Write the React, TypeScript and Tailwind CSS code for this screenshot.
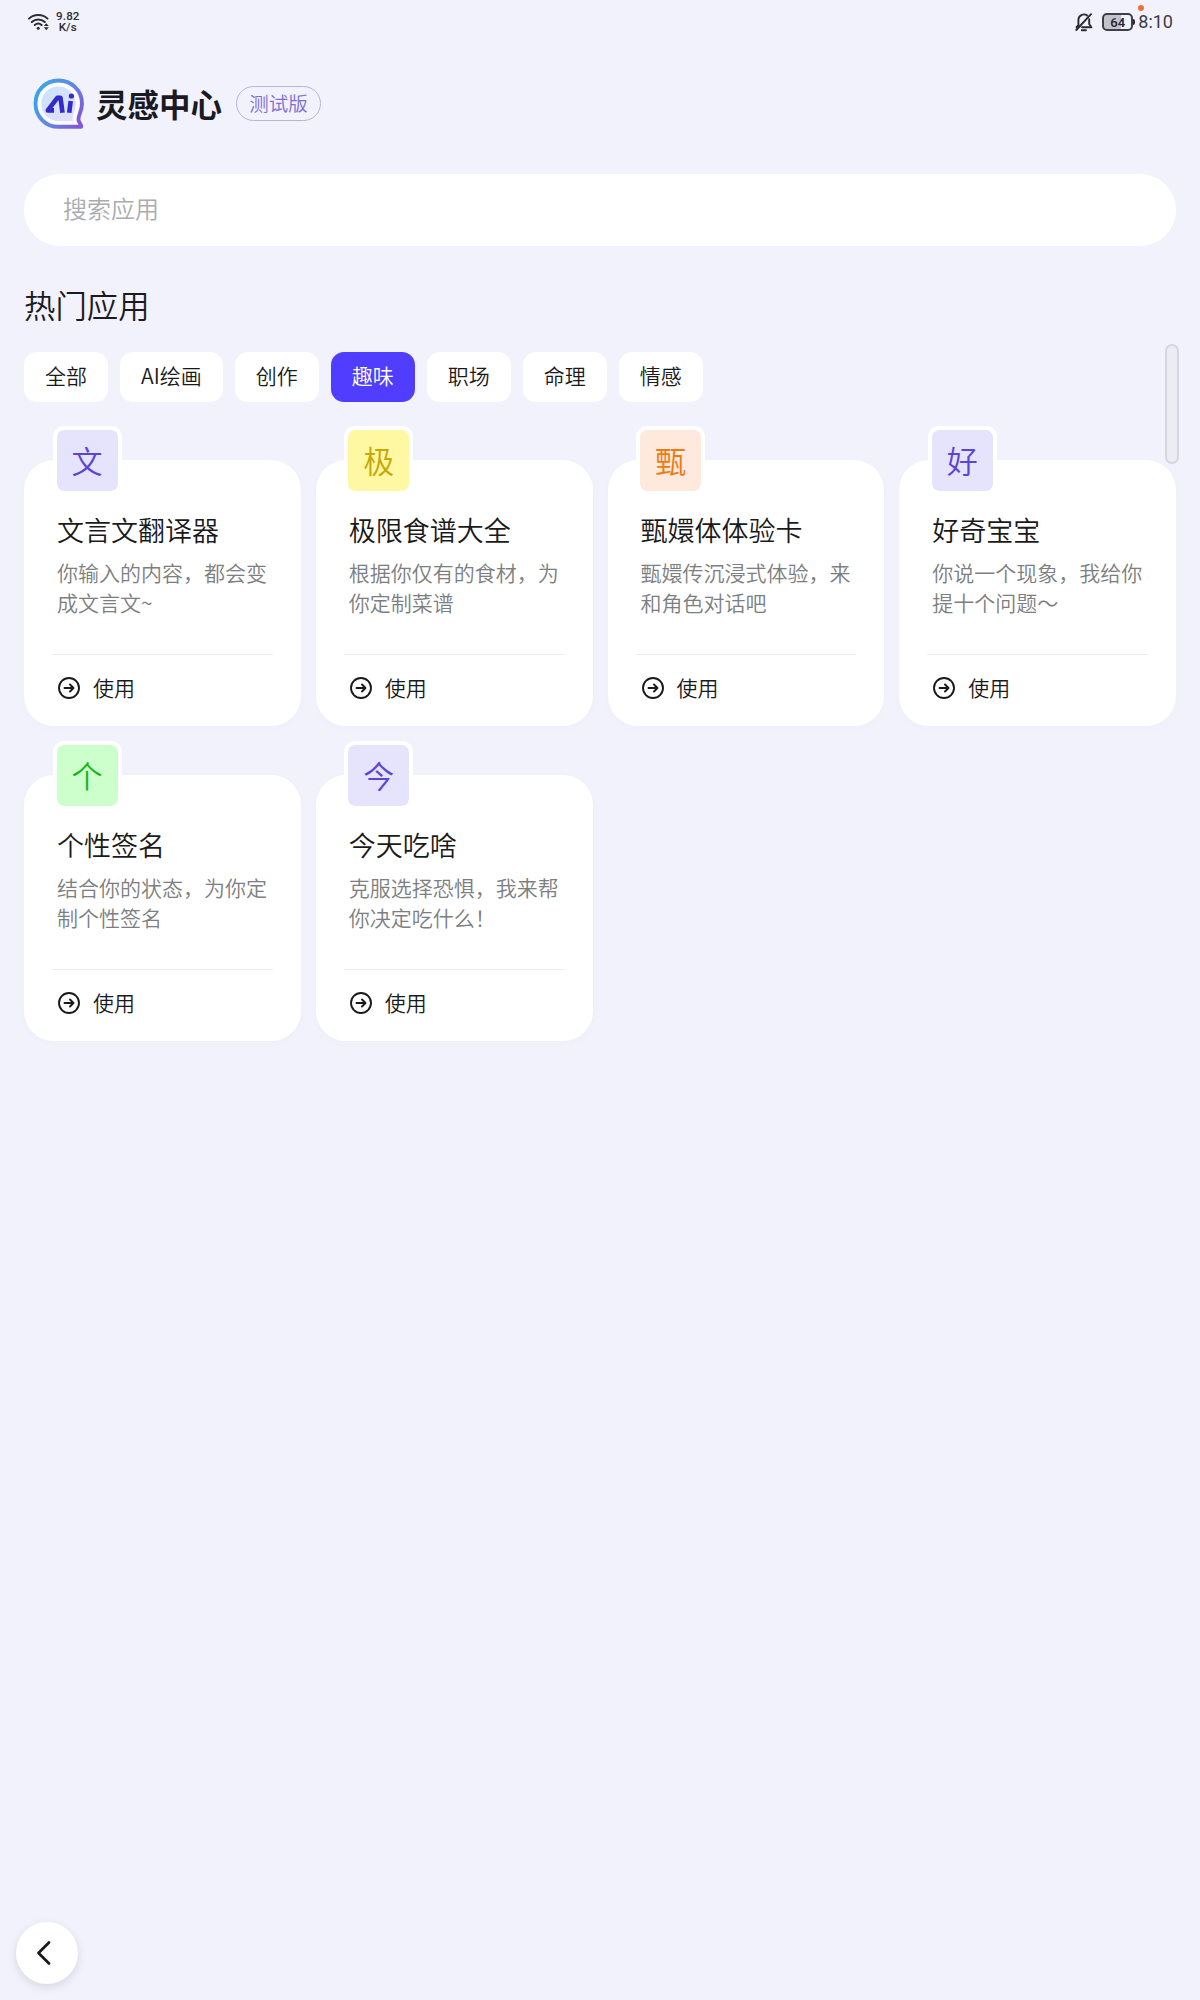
import { useState } from "react";

type AppItem = {
  name: string;
  description: string;
  badgeClassName: string;
};

const categories = ["全部", "AI绘画", "创作", "趣味", "职场", "命理", "情感"];

const apps: AppItem[] = [
  {
    name: "文言文翻译器",
    description: "你输入的内容，都会变成文言文~",
    badgeClassName: "bg-[#e6e3fd] text-[#5b45d6]",
  },
  {
    name: "极限食谱大全",
    description: "根据你仅有的食材，为你定制菜谱",
    badgeClassName: "bg-[#fff8a2] text-[#c6a806]",
  },
  {
    name: "甄嬛体体验卡",
    description: "甄嬛传沉浸式体验，来和角色对话吧",
    badgeClassName: "bg-[#ffe9dc] text-[#ee7a12]",
  },
  {
    name: "好奇宝宝",
    description: "你说一个现象，我给你提十个问题～",
    badgeClassName: "bg-[#e6e3fd] text-[#5b45d6]",
  },
  {
    name: "个性签名",
    description: "结合你的状态，为你定制个性签名",
    badgeClassName: "bg-[#ccffcb] text-[#19b518]",
  },
  {
    name: "今天吃啥",
    description: "克服选择恐惧，我来帮你决定吃什么！",
    badgeClassName: "bg-[#e6e3fd] text-[#5b45d6]",
  },
];

function StatusBar() {
  return (
    <div className="flex h-11 items-center justify-between pr-[27px] pl-7 font-['Roboto'] text-[#2b2b35]">
      <div className="flex items-center gap-[7px]">
        <svg width="21" height="18" viewBox="0 0 21 18" fill="none" stroke="currentColor" strokeWidth="2" strokeLinecap="round">
          <path d="M1 5.600c5-4.800 13.500-4.800 18.500 0M3.800 9c3.600-3.400 9.300-3.400 13 0M6.800 12c2-1.700 4.800-1.700 6.800 0" />
          <circle cx="10.200" cy="15.300" r="1.500" fill="currentColor" stroke="none" />
          <path d="m18.300 10.200 2.500 2.900h-5zM18.300 17.200l2.500-2.900h-5z" fill="currentColor" stroke="none" />
        </svg>
        <div className="text-center text-[11.500px] leading-[11px] font-medium tracking-[0.2px]">
          <div>9.82</div>
          <div>K/s</div>
        </div>
      </div>
      <div className="relative flex items-center">
        <svg width="18" height="20" viewBox="0 0 18 20" fill="none" stroke="currentColor" strokeWidth="1.900" strokeLinecap="round" strokeLinejoin="round">
          <path d="M3.400 13V7.800a5.500 5.500 0 0 1 8.600-4.400M14.200 7.300V12l2.200 3.200H7M1.600 15.200 3.400 13M16 2.200 1.300 18M6.800 18.200h4.200" />
        </svg>
        <div className="ml-[9px] flex h-[18px] w-[31px] items-center justify-center rounded-[5px] border-2 border-[#3f3f49] bg-linear-to-r from-[#c3c3cd] from-64% to-transparent to-64% text-[13px] leading-none font-semibold">
          64
        </div>
        <span className="h-1.5 w-0.5 rounded-r bg-current" />
        <span className="ml-[3px] text-[18px] leading-none font-normal text-[#3c3c46]">8:10</span>
        <span className="absolute -top-[7px] right-[29px] size-1.5 rounded-full bg-[#f0703c]" />
      </div>
    </div>
  );
}

function Logo() {
  return (
    <svg width="54" height="54" viewBox="0 0 54 54" fill="none" aria-hidden="true">
      <defs>
        <linearGradient id="logo-ring" x1="3" y1="12" x2="50" y2="42" gradientUnits="userSpaceOnUse">
          <stop stopColor="#38a7e6" />
          <stop offset="0.550" stopColor="#6385e5" />
          <stop offset="1" stopColor="#8258d2" />
        </linearGradient>
        <linearGradient id="logo-fill" x1="12" y1="10" x2="42" y2="44" gradientUnits="userSpaceOnUse">
          <stop stopColor="#c9e4fb" />
          <stop offset="1" stopColor="#e3defa" />
        </linearGradient>
      </defs>
      <path
        d="M26.500 3.500C13.500 3.500 3.500 13.500 3.500 26.500S13.500 49.800 26.500 49.800H48.600C49.400 49.800 49.500 49.200 49 48.500L46.800 44.200C46 42.500 46.500 40.500 47.500 37.500C49 34 50 31 50 26.500C50 13.500 39.500 3.500 26.500 3.500Z"
        fill="#fbfbff"
        stroke="url(#logo-ring)"
        strokeWidth="3.900"
      />
      <path d="M26.500 9.500a17.300 17.300 0 0 0 0 34.600h14.500c-.8-4 .2-6.500 1.400-10A17.500 17.500 0 0 0 26.500 9.500Z" fill="url(#logo-fill)" />
      <g stroke="#3429c9" strokeWidth="4.600" strokeLinejoin="round">
        <path d="M22 33.400H15.800L25.300 20.800H28.500L30.500 35.700" />
        <path d="M38.700 24 37.200 35.700" />
      </g>
      <circle cx="39.400" cy="19" r="2.600" fill="#3429c9" />
    </svg>
  );
}

function ArrowCircle() {
  return (
    <svg width="24" height="24" viewBox="0 0 24 24" fill="none" stroke="currentColor" strokeWidth="1.900" strokeLinecap="round" strokeLinejoin="round" aria-hidden="true">
      <circle cx="12" cy="12" r="10" />
      <path d="M7.500 12h9M13 8.500l3.500 3.500-3.500 3.500" />
    </svg>
  );
}

function AppCard({ name, description, badgeClassName }: AppItem) {
  return (
    <article className="relative h-[266px] rounded-[30px] bg-white px-[33px] pt-[50px] shadow-[0_2px_8px_rgb(90_90_160/0.02)]">
      <div
        className={`absolute -top-[34px] left-[28.500px] flex size-[69px] items-center justify-center rounded-[11px] border-4 border-white bg-clip-padding pb-0.5 text-[31px] leading-none ${badgeClassName}`}
      >
        {name[0]}
      </div>
      <h3 className="text-[27px] leading-10 text-[#1a1a1a]">{name}</h3>
      <p className="mt-[7px] h-[60px] text-[21px] leading-[30px] text-[#7c7e80]">{description}</p>
      <div className="-mx-[5px] mt-[37px] h-px bg-[#ececf0]" />
      <button type="button" className="mt-[17px] flex h-8 cursor-pointer items-center gap-3 text-[21px] leading-8 text-[#1a1a1a]">
        <ArrowCircle />
        <span className="pb-0.5">使用</span>
      </button>
    </article>
  );
}

export default function App() {
  const [activeCategory, setActiveCategory] = useState("趣味");

  return (
    <div className="relative min-h-[2000px] w-[1200px] bg-[#f2f2fc] font-['Noto_Sans_CJK_SC',sans-serif] font-[350] text-[#1a1a22]">
      <StatusBar />

      <header className="flex h-[119px] items-center pl-8">
        <Logo />
        <h1 className="ml-[10px] text-[31.500px] leading-none font-bold">灵感中心</h1>
        <span className="ml-[14px] flex h-[35px] w-[85px] items-center justify-center rounded-full border border-[#b9b2dd] pb-px text-[19.500px] leading-none text-[#7f6fd4]">
          测试版
        </span>
      </header>

      <main className="px-6 pt-[11px]">
        <input
          type="text"
          placeholder="搜索应用"
          aria-label="搜索应用"
          className="block h-[72px] w-full rounded-full bg-white px-[39px] pb-[5px] text-[24px] outline-none placeholder:text-[#aaacae]"
        />

        <h2 className="mt-[37px] text-[31.400px] leading-[44px]">热门应用</h2>

        <nav className="mt-[25px] flex gap-3">
          {categories.map((category) => (
            <button
              key={category}
              type="button"
              onClick={() => setActiveCategory(category)}
              className={`h-[50px] cursor-pointer rounded-[13px] px-[21px] pb-[3px] text-[21px] leading-none ${
                category === activeCategory ? "bg-[#503dff] text-white" : "bg-white text-[#1a1a1a]"
              }`}
            >
              {category}
            </button>
          ))}
        </nav>

        <section className="mt-[58px] grid grid-cols-4 gap-x-[15px] gap-y-[49px]">
          {apps.map((app) => (
            <AppCard key={app.name} {...app} />
          ))}
        </section>
      </main>

      <div className="absolute top-[344px] right-[21px] h-[120px] w-[14px] rounded-full border-2 border-[#d6d6e0] bg-[#ececf5]" />

      <button
        type="button"
        aria-label="返回"
        className="absolute top-[1922px] left-4 flex size-[62px] cursor-pointer items-center justify-center rounded-full bg-white shadow-[0_3px_8px_rgb(60_60_90/0.15)]"
      >
        <svg width="24" height="28" viewBox="0 0 24 28" fill="none" stroke="#1a1a1a" strokeWidth="2.800" strokeLinecap="round" strokeLinejoin="round" className="-ml-1.5">
          <path d="M17 3.500 6.500 14 17 24.500" />
        </svg>
      </button>
    </div>
  );
}
